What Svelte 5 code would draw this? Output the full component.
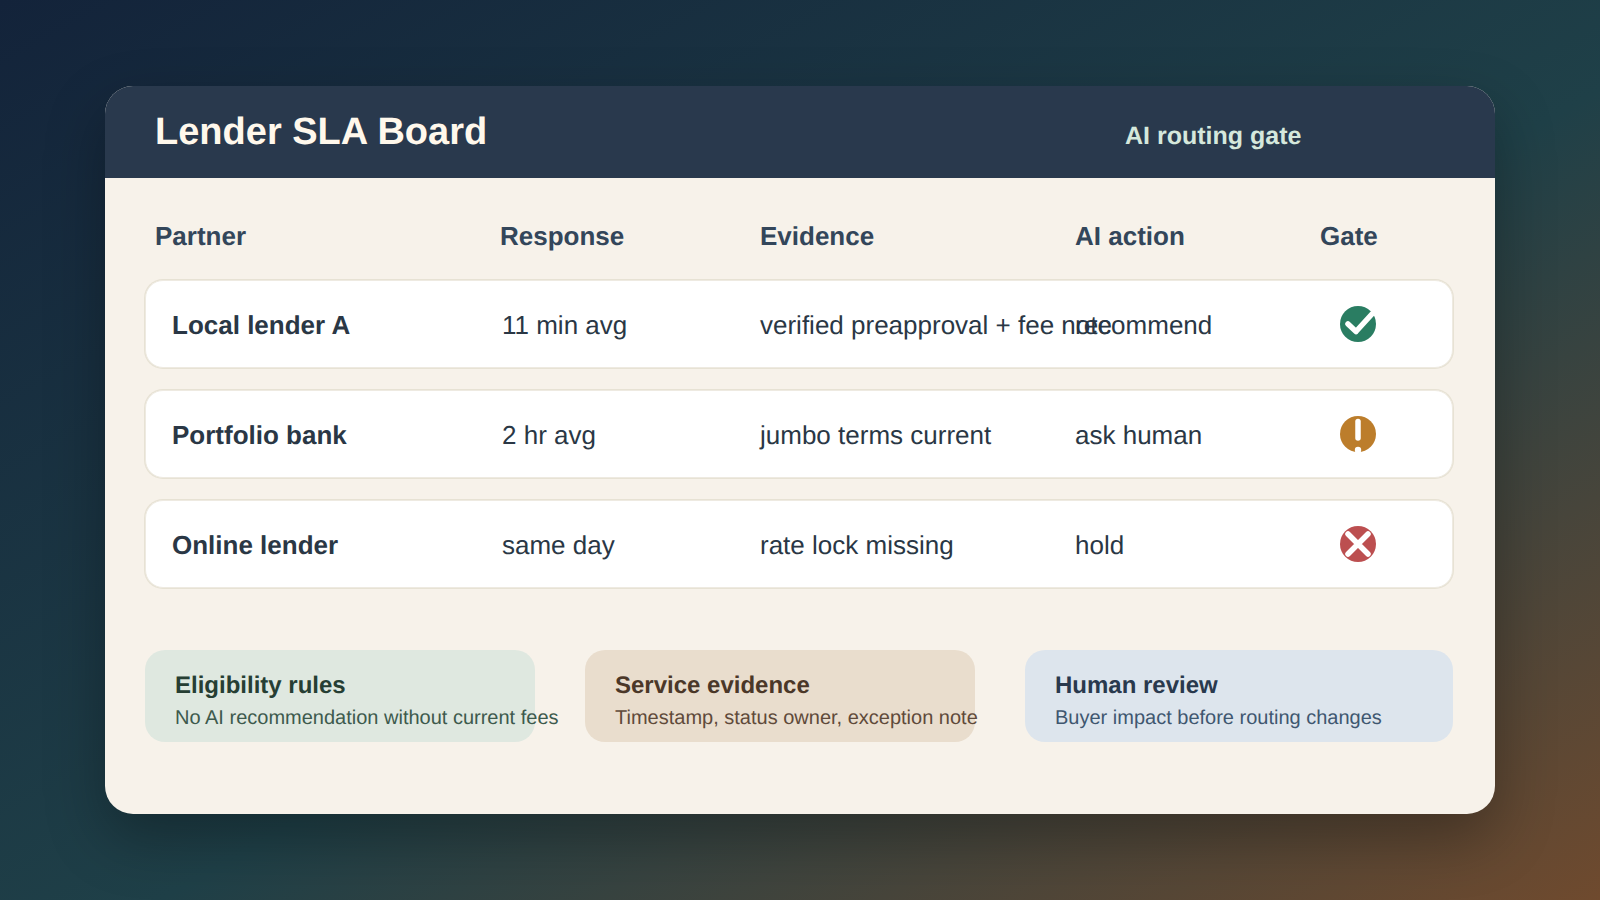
<script>
	const rows = [
		{ partner: 'Local lender A', response: '11 min avg', evidence: 'verified preapproval + fee note', action: 'recommend', gate: 'ok' },
		{ partner: 'Portfolio bank', response: '2 hr avg', evidence: 'jumbo terms current', action: 'ask human', gate: 'warn' },
		{ partner: 'Online lender', response: 'same day', evidence: 'rate lock missing', action: 'hold', gate: 'stop' }
	];

	const notes = [
		{ title: 'Eligibility rules', text: 'No AI recommendation without current fees', tone: 'green' },
		{ title: 'Service evidence', text: 'Timestamp, status owner, exception note', tone: 'tan' },
		{ title: 'Human review', text: 'Buyer impact before routing changes', tone: 'blue' }
	];
</script>

<div class="page">
	<section class="card">
		<header class="top">
			<h1>Lender SLA Board</h1>
			<span class="sub">AI routing gate</span>
		</header>

		<div class="body">
			<div class="heads">
				<span>Partner</span>
				<span>Response</span>
				<span>Evidence</span>
				<span>AI action</span>
				<span>Gate</span>
			</div>

			<div class="rows">
				{#each rows as row}
					<div class="row">
						<strong>{row.partner}</strong>
						<span>{row.response}</span>
						<span>{row.evidence}</span>
						<span>{row.action}</span>
						<svg class="gate" width="36" height="36" viewBox="-18 -18 36 36">
							{#if row.gate === 'ok'}
								<circle r="18" fill="#2a7d62" />
								<path d="M-10 0 L-2 7.5 L14 -10" />
							{:else if row.gate === 'warn'}
								<circle r="18" fill="#bc7d2b" />
								<path d="M0 -12.5 L0 4" />
								<circle class="dot" cy="16" r="3.2" />
							{:else}
								<circle r="18" fill="#bc4f50" />
								<path d="M-10 10 L10 -10 M-10 -10 L10 10" />
							{/if}
						</svg>
					</div>
				{/each}
			</div>

			<div class="notes">
				{#each notes as note}
					<div class="note {note.tone}">
						<h2>{note.title}</h2>
						<p>{note.text}</p>
					</div>
				{/each}
			</div>
		</div>
	</section>
</div>

<style>
	:global(body) {
		margin: 0;
	}

	.page {
		width: 1600px;
		height: 900px;
		box-sizing: border-box;
		padding: 86px 105px;
		overflow: hidden;
		background: linear-gradient(to bottom right, #13233a 0%, #1f4048 55%, #6f4a2e 100%);
		font-family: 'Liberation Sans', Arial, sans-serif;
		text-rendering: geometricPrecision;
	}

	.card {
		width: 1390px;
		height: 728px;
		border-radius: 28px;
		overflow: hidden;
		background: #f7f2ea;
		box-shadow: 0 24px 60px rgba(0, 0, 0, 0.3);
	}

	.top {
		height: 92px;
		box-sizing: border-box;
		padding: 0 50px;
		display: grid;
		grid-template-columns: 970px auto;
		align-items: center;
		background: #29394d;
	}

	h1 {
		margin: 0;
		font-size: 38px;
		font-weight: 700;
		color: #fff8ec;
	}

	.sub {
		margin-top: 8px;
		font-size: 25px;
		font-weight: 700;
		color: #d5e8dc;
	}

	.body {
		padding: 40px 42px 0 40px;
	}

	.heads {
		height: 62px;
		padding-left: 10px;
		display: grid;
		grid-template-columns: 345px 260px 315px 245px auto;
		font-size: 26px;
		font-weight: 700;
		line-height: 36px;
		color: #33465a;
	}

	.rows {
		display: flex;
		flex-direction: column;
		gap: 22px;
	}

	/* 1px line split across two pixels: border is the inner half, shadow the outer */
	.row {
		height: 88px;
		box-sizing: border-box;
		padding-left: 26px;
		display: grid;
		grid-template-columns: 330px 258px 315px 265px 36px;
		align-items: center;
		border: 1px solid #eeeae1;
		border-radius: 18px;
		box-shadow: 0 0 0 1px #e7e2d4;
		background: #fff;
		font-size: 26px;
		color: #2a3745;
		white-space: nowrap;
	}

	.row strong,
	.row span {
		padding-top: 2px;
	}

	.row strong {
		font-weight: 700;
	}

	.gate {
		overflow: visible;
	}

	.gate path {
		fill: none;
		stroke: #fff;
		stroke-width: 5.5;
		stroke-linecap: round;
		stroke-linejoin: round;
	}

	.gate .dot {
		fill: #fff;
	}

	.notes {
		margin-top: 62px;
		display: grid;
		grid-template-columns: 390px 390px 428px;
		gap: 50px;
	}

	.note {
		height: 92px;
		box-sizing: border-box;
		padding: 22px 30px 0;
		border-radius: 20px;
		white-space: nowrap;
	}

	.note h2 {
		margin: 0;
		font-size: 24px;
		line-height: 28px;
		font-weight: 700;
	}

	.note p {
		margin: 4px 0 0;
		font-size: 20px;
		line-height: 28px;
	}

	.green {
		background: #dfe8e0;
	}
	.green h2 {
		color: #263e33;
	}
	.green p {
		color: #3d5a4d;
	}

	.tan {
		background: #e9ddcd;
	}
	.tan h2 {
		color: #4b3728;
	}
	.tan p {
		color: #5f4a3a;
	}

	.blue {
		background: #dde5ed;
	}
	.blue h2 {
		color: #29394d;
	}
	.blue p {
		color: #3f5770;
	}
</style>
